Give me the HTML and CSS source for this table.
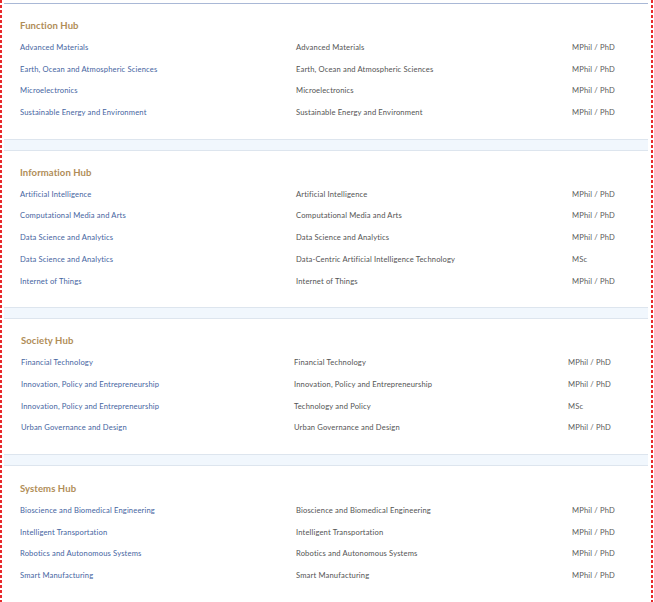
FILE: index.html
```html
<!DOCTYPE html>
<html lang="en">
<head>
<meta charset="utf-8">
<title>Hubs and Programmes</title>
<link rel="stylesheet" href="styles.css">
</head>
<body>
<div class="page">
  <section class="hub first">
    <h2 class="hub-title">Function Hub</h2>
    <div class="row"><a class="thrust">Advanced Materials</a><span class="prog">Advanced Materials</span><span class="deg">MPhil / PhD</span></div>
    <div class="row"><a class="thrust">Earth, Ocean and Atmospheric Sciences</a><span class="prog">Earth, Ocean and Atmospheric Sciences</span><span class="deg">MPhil / PhD</span></div>
    <div class="row"><a class="thrust">Microelectronics</a><span class="prog">Microelectronics</span><span class="deg">MPhil / PhD</span></div>
    <div class="row"><a class="thrust">Sustainable Energy and Environment</a><span class="prog">Sustainable Energy and Environment</span><span class="deg">MPhil / PhD</span></div>
  </section>
  <div class="band"></div>
  <section class="hub">
    <h2 class="hub-title">Information Hub</h2>
    <div class="row"><a class="thrust">Artificial Intelligence</a><span class="prog">Artificial Intelligence</span><span class="deg">MPhil / PhD</span></div>
    <div class="row"><a class="thrust">Computational Media and Arts</a><span class="prog">Computational Media and Arts</span><span class="deg">MPhil / PhD</span></div>
    <div class="row"><a class="thrust">Data Science and Analytics</a><span class="prog">Data Science and Analytics</span><span class="deg">MPhil / PhD</span></div>
    <div class="row"><a class="thrust">Data Science and Analytics</a><span class="prog">Data-Centric Artificial Intelligence Technology</span><span class="deg">MSc</span></div>
    <div class="row"><a class="thrust">Internet of Things</a><span class="prog">Internet of Things</span><span class="deg">MPhil / PhD</span></div>
  </section>
  <div class="band"></div>
  <section class="hub society">
    <h2 class="hub-title">Society Hub</h2>
    <div class="row"><a class="thrust">Financial Technology</a><span class="prog">Financial Technology</span><span class="deg">MPhil / PhD</span></div>
    <div class="row"><a class="thrust">Innovation, Policy and Entrepreneurship</a><span class="prog">Innovation, Policy and Entrepreneurship</span><span class="deg">MPhil / PhD</span></div>
    <div class="row"><a class="thrust">Innovation, Policy and Entrepreneurship</a><span class="prog">Technology and Policy</span><span class="deg">MSc</span></div>
    <div class="row"><a class="thrust">Urban Governance and Design</a><span class="prog">Urban Governance and Design</span><span class="deg">MPhil / PhD</span></div>
  </section>
  <div class="band"></div>
  <section class="hub">
    <h2 class="hub-title">Systems Hub</h2>
    <div class="row"><a class="thrust">Bioscience and Biomedical Engineering</a><span class="prog">Bioscience and Biomedical Engineering</span><span class="deg">MPhil / PhD</span></div>
    <div class="row"><a class="thrust">Intelligent Transportation</a><span class="prog">Intelligent Transportation</span><span class="deg">MPhil / PhD</span></div>
    <div class="row"><a class="thrust">Robotics and Autonomous Systems</a><span class="prog">Robotics and Autonomous Systems</span><span class="deg">MPhil / PhD</span></div>
    <div class="row"><a class="thrust">Smart Manufacturing</a><span class="prog">Smart Manufacturing</span><span class="deg">MPhil / PhD</span></div>
  </section>
</div>
</body>
</html>
```
FILE: styles.css
```css
html, body {
  margin: 0;
  padding: 0;
  background: #ffffff;
}
body {
  font-family: "Lato", "Noto Sans", "Liberation Sans", sans-serif;
}
.page {
  width: 649px;
  padding: 3px 2px 0 2px;
  min-height: 599px;
  background-image:
    repeating-linear-gradient(to bottom, #e8292b 0 3px, transparent 3px 5px),
    repeating-linear-gradient(to bottom, #e8292b 0 3px, transparent 3px 5px);
  background-size: 2px 100%, 2px 100%;
  background-position: 0 0, 651px 0;
  background-repeat: no-repeat;
}
.hub {
  margin: 0 3px 0 2px;
  padding: 11px 0 15px 16px;
}
.hub.first {
  border-top: 1px solid #a9b8d6;
}
.hub:last-child {
  padding-bottom: 16px;
  border-bottom: 1px solid #dde5ee;
}
.society + .band + .hub .hub-title {
  margin-top: 1px;
}
.hub-title {
  margin: 0;
  height: 22px;
  line-height: 22px;
  font-size: 9.5px;
  font-weight: 700;
  letter-spacing: 0.1px;
  color: #b08d57;
}
.row {
  display: grid;
  grid-template-columns: 276px 276px 1fr;
  height: 21.7px;
  line-height: 21.7px;
  font-size: 7.6px;
  letter-spacing: 0.15px;
}
.society {
  padding-left: 17px;
}
.society .row {
  grid-template-columns: 273px 274px 1fr;
}
.thrust {
  color: #46659f;
  text-decoration: none;
}
.prog {
  color: #545454;
}
.deg {
  color: #5a5a5a;
}
.band {
  margin: 0 3px 0 2px;
  height: 10px;
  background: #f1f7fd;
  border-top: 1px solid #dde5ee;
  border-bottom: 1px solid #dde5ee;
}
```
